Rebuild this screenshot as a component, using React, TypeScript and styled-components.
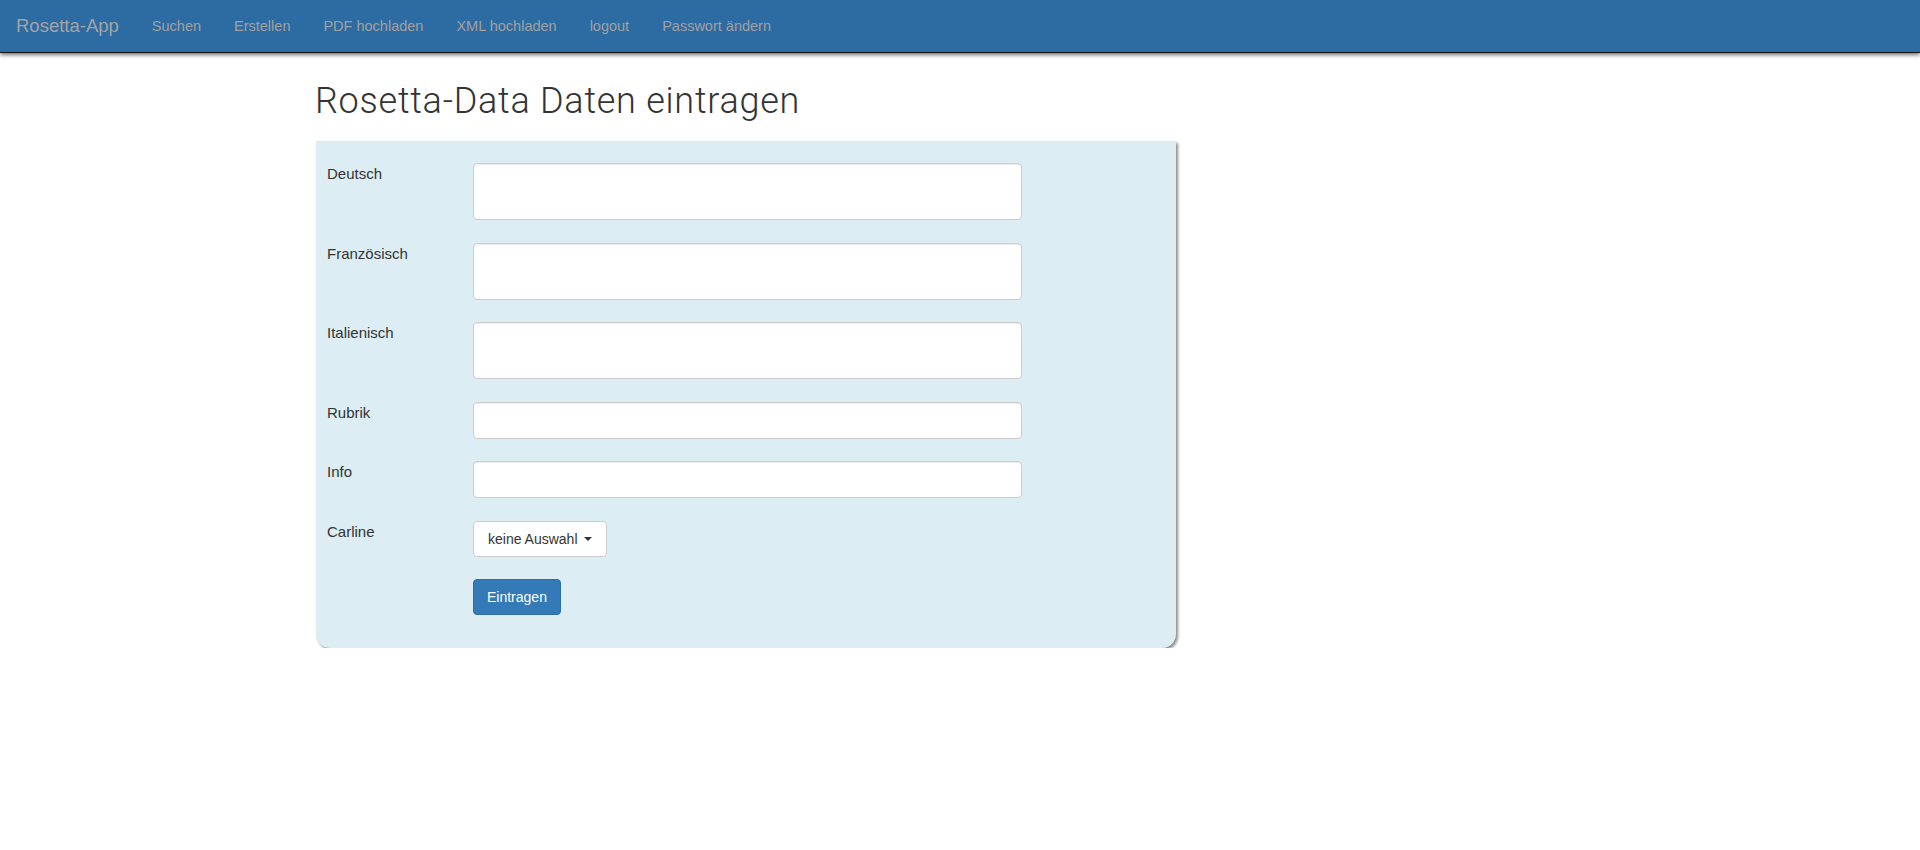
import React from "react";
import styled, { createGlobalStyle } from "styled-components";

const GlobalStyle = createGlobalStyle`
  html, body { margin: 0; padding: 0; background: #ffffff; }
  body {
    font-family: "Liberation Sans", Arial, Helvetica, sans-serif;
    color: #333333;
  }
  *, *::before, *::after { box-sizing: border-box; }
`;

const NavBar = styled.nav`
  height: 53px;
  background: #2d6ca3;
  border-bottom: 1px solid #151515;
  box-shadow: 0 2px 4px rgba(0, 0, 0, 0.55);
  display: flex;
  align-items: center;
  padding-left: 16px;
`;

const Brand = styled.a`
  font-size: 18.5px;
  color: #a3a3a3;
  text-decoration: none;
  margin-right: 33px;
  line-height: 20px;
`;

const NavList = styled.ul`
  display: flex;
  gap: 33px;
  list-style: none;
  margin: 0;
  padding: 0;
`;

const NavLink = styled.a`
  font-size: 14.5px;
  line-height: 20px;
  color: #a0a0a0;
  text-decoration: none;
`;

const Main = styled.main`
  padding: 0 0 0 316px;
`;

const Title = styled.h1`
  font-family: Roboto, "Liberation Sans", Arial, sans-serif;
  font-weight: 300;
  font-size: 36px;
  line-height: 40px;
  letter-spacing: 0.75px;
  color: #333333;
  margin: 28px 0 20px -1px;
`;

const Panel = styled.form`
  width: 860px;
  background: #dceef3;
  border-radius: 0 0 14px 14px;
  box-shadow: 2px 2px 3px rgba(0, 0, 0, 0.45);
  padding: 22px 0 33px 11px;
  display: grid;
  grid-template-columns: 146px 549px;
  row-gap: 22.5px;
`;

const Label = styled.label`
  font-size: 15px;
  line-height: 20px;
  padding-top: 1px;
  color: #333333;
`;

const fieldBase = `
  display: block;
  width: 100%;
  border: 1px solid #cccccc;
  border-radius: 4px;
  background: #ffffff;
  box-shadow: inset 0 1px 1px rgba(0, 0, 0, 0.075);
  font-family: "Liberation Sans", Arial, sans-serif;
  font-size: 14px;
  padding: 6px 12px;
  margin: 0;
  outline: none;
`;

const TextArea = styled.textarea`
  ${fieldBase}
  height: 57px;
  resize: none;
`;

const TextInput = styled.input`
  ${fieldBase}
  height: 37px;
`;

const Cell = styled.div`
  display: flex;
  align-items: flex-start;
`;

const DropButton = styled.button`
  display: inline-flex;
  align-items: center;
  height: 36px;
  padding: 0 14px;
  border: 1px solid #cccccc;
  border-radius: 4px;
  background: #ffffff;
  color: #333333;
  font-family: "Liberation Sans", Arial, sans-serif;
  font-size: 14px;
  cursor: pointer;
`;

const Caret = styled.span`
  display: inline-block;
  width: 0;
  height: 0;
  margin-left: 6px;
  border-top: 4px solid #333333;
  border-left: 4px solid transparent;
  border-right: 4px solid transparent;
`;

const SubmitButton = styled.button`
  height: 36px;
  padding: 0 13px;
  border: 1px solid #2e6da4;
  border-radius: 4px;
  background: #337ab7;
  color: #ffffff;
  font-family: "Liberation Sans", Arial, sans-serif;
  font-size: 14px;
  cursor: pointer;
`;

const navItems = [
  "Suchen",
  "Erstellen",
  "PDF hochladen",
  "XML hochladen",
  "logout",
  "Passwort ändern",
];

export default function App() {
  return (
    <>
      <GlobalStyle />
      <NavBar>
        <Brand href="#">Rosetta-App</Brand>
        <NavList>
          {navItems.map((item) => (
            <li key={item}>
              <NavLink href="#">{item}</NavLink>
            </li>
          ))}
        </NavList>
      </NavBar>
      <Main>
        <Title>Rosetta-Data Daten eintragen</Title>
        <Panel onSubmit={(e) => e.preventDefault()}>
          <Label>Deutsch</Label>
          <TextArea />
          <Label>Französisch</Label>
          <TextArea />
          <Label>Italienisch</Label>
          <TextArea />
          <Label>Rubrik</Label>
          <TextInput type="text" />
          <Label>Info</Label>
          <TextInput type="text" />
          <Label>Carline</Label>
          <Cell>
            <DropButton type="button">
              keine Auswahl
              <Caret />
            </DropButton>
          </Cell>
          <span />
          <Cell>
            <SubmitButton type="submit">Eintragen</SubmitButton>
          </Cell>
        </Panel>
      </Main>
    </>
  );
}
